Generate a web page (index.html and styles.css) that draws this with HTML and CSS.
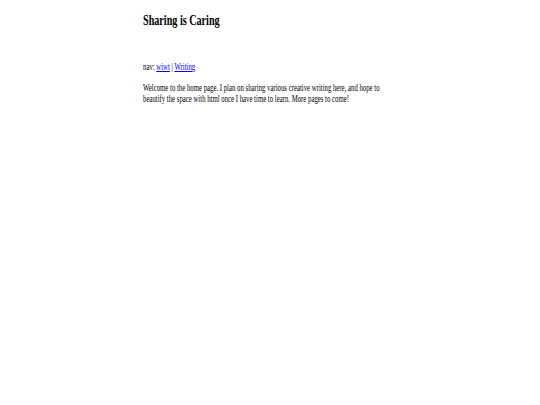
FILE: index.html
```html
<!DOCTYPE html>
<html>
<head>
<meta charset="utf-8">
<title>Sharing is Caring</title>
<link rel="stylesheet" href="styles.css">
</head>
<body>
<div class="content">
  <h1 class="title">Sharing is Caring</h1>
  <p class="nav">nav: <a href="#">wiwt</a> | <a href="#">Writing</a></p>
  <p class="intro">Welcome to the home page. I plan on sharing various creative writing here, and hope to beautify the space with html once I have time to learn. More pages to come!</p>
</div>
</body>
</html>
```
FILE: styles.css
```css
html, body {
  margin: 0;
  padding: 0;
  background: #ffffff;
}
body {
  padding-top: 12px;
}
.content {
  margin-left: 143px;
  width: 385px;
  transform: scaleX(0.676);
  transform-origin: 0 0;
  font-family: "Liberation Serif", "Times New Roman", serif;
  font-size: 10px;
  color: #000;
}
.title {
  margin: 0;
  font-size: 15px;
  line-height: 17px;
  font-weight: bold;
}
.nav {
  margin: 32px 0 0 0;
  line-height: 11px;
}
.nav a {
  color: #0000ee;
}
.intro {
  margin: 10px 0 0 0;
  line-height: 11px;
}
```
